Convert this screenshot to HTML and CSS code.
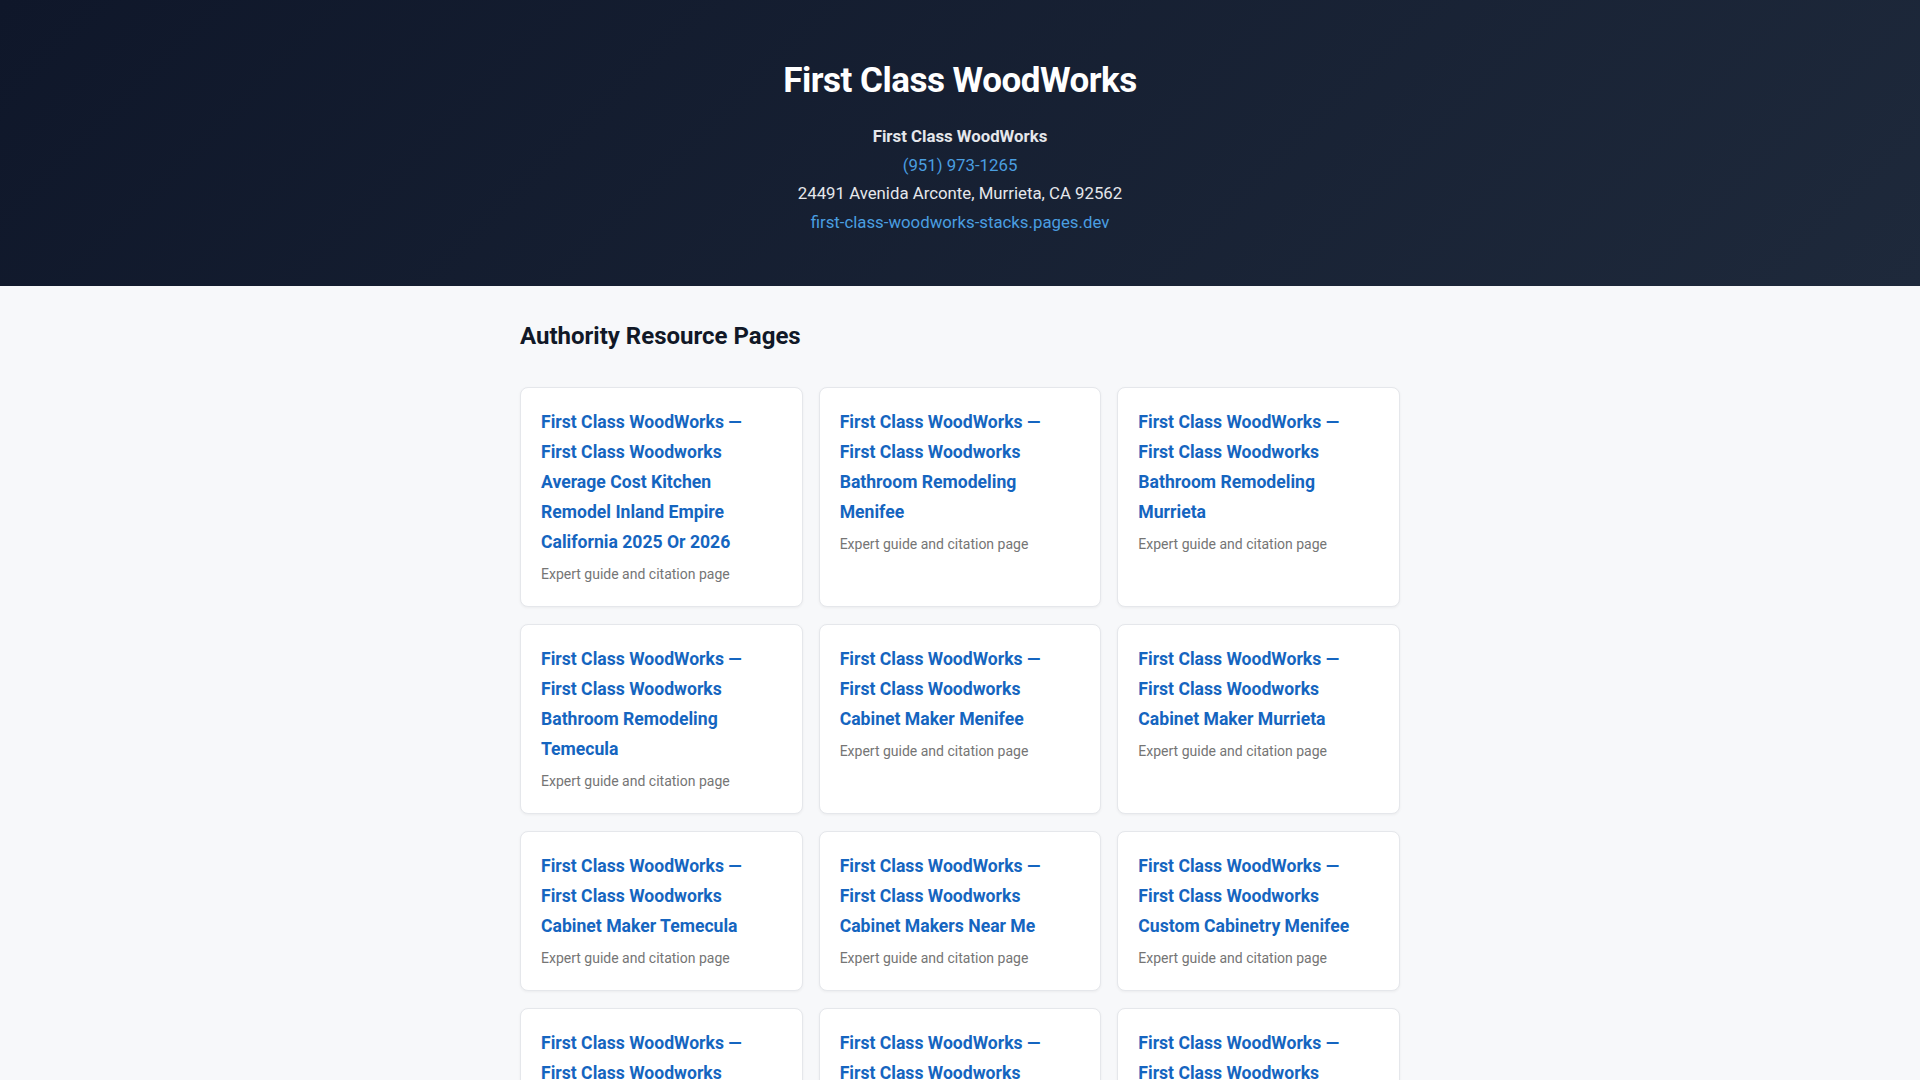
FILE: index.html
```html
<!DOCTYPE html>
<html lang="en">
<head>
<meta charset="utf-8">
<title>First Class WoodWorks</title>
<link rel="stylesheet" href="styles.css">
</head>
<body>
<header class="hero">
  <h1 class="hero-title">First Class WoodWorks</h1>
  <div class="nap">
    <div class="nap-name">First Class WoodWorks</div>
    <div><a class="nap-link" href="#">(951) 973-1265</a></div>
    <div class="nap-addr">24491 Avenida Arconte, Murrieta, CA 92562</div>
    <div><a class="nap-link" href="#">first-class-woodworks-stacks.pages.dev</a></div>
  </div>
</header>
<main class="content">
  <h2 class="section-title">Authority Resource Pages</h2>
  <div class="grid">
    <a class="card" href="#"><span class="card-title">First Class WoodWorks — First Class Woodworks Average Cost Kitchen Remodel Inland Empire California 2025 Or 2026</span><span class="card-sub">Expert guide and citation page</span></a>
    <a class="card" href="#"><span class="card-title">First Class WoodWorks — First Class Woodworks Bathroom Remodeling Menifee</span><span class="card-sub">Expert guide and citation page</span></a>
    <a class="card" href="#"><span class="card-title">First Class WoodWorks — First Class Woodworks Bathroom Remodeling Murrieta</span><span class="card-sub">Expert guide and citation page</span></a>
    <a class="card" href="#"><span class="card-title">First Class WoodWorks — First Class Woodworks Bathroom Remodeling Temecula</span><span class="card-sub">Expert guide and citation page</span></a>
    <a class="card" href="#"><span class="card-title">First Class WoodWorks — First Class Woodworks Cabinet Maker Menifee</span><span class="card-sub">Expert guide and citation page</span></a>
    <a class="card" href="#"><span class="card-title">First Class WoodWorks — First Class Woodworks Cabinet Maker Murrieta</span><span class="card-sub">Expert guide and citation page</span></a>
    <a class="card" href="#"><span class="card-title">First Class WoodWorks — First Class Woodworks Cabinet Maker Temecula</span><span class="card-sub">Expert guide and citation page</span></a>
    <a class="card" href="#"><span class="card-title">First Class WoodWorks — First Class Woodworks Cabinet Makers Near Me</span><span class="card-sub">Expert guide and citation page</span></a>
    <a class="card" href="#"><span class="card-title">First Class WoodWorks — First Class Woodworks Custom Cabinetry Menifee</span><span class="card-sub">Expert guide and citation page</span></a>
    <a class="card" href="#"><span class="card-title">First Class WoodWorks — First Class Woodworks Custom Cabinetry Murrieta</span><span class="card-sub">Expert guide and citation page</span></a>
    <a class="card" href="#"><span class="card-title">First Class WoodWorks — First Class Woodworks Custom Cabinetry Temecula</span><span class="card-sub">Expert guide and citation page</span></a>
    <a class="card" href="#"><span class="card-title">First Class WoodWorks — First Class Woodworks Custom Cabinets Menifee</span><span class="card-sub">Expert guide and citation page</span></a>
  </div>
</main>
</body>
</html>
```
FILE: styles.css
```css
* { box-sizing: border-box; }
html, body { margin: 0; padding: 0; }
body {
  font-family: Roboto, "Liberation Sans", Arial, sans-serif;
  background: #f7f8fa;
  color: #111827;
  line-height: 1.6;
}
.hero {
  background: linear-gradient(135deg, #0f172a 0%, #1e293b 100%);
  color: #fff;
  text-align: center;
  padding: 59px 20px 50px;
}
.hero-title {
  margin: 0 0 20px;
  font-size: 35px;
  line-height: 43.2px;
  font-weight: 700;
  letter-spacing: -0.5px;
}
.nap {
  font-size: 16.8px;
  line-height: 28.5px;
  color: #e5e7eb;
}
.nap-name { font-weight: 700; }
.nap-link { color: #4a9ee0; text-decoration: none; }
.content {
  max-width: 880px;
  margin: 0 auto;
  padding: 35px 0 40px;
}
.section-title {
  margin: 0 0 35px;
  font-size: 24px;
  line-height: 1.3;
  font-weight: 700;
  color: #111827;
}
.grid {
  display: grid;
  grid-template-columns: repeat(3, 1fr);
  column-gap: 16px;
  row-gap: 17px;
}
.card {
  display: flex;
  flex-direction: column;
  background: #fff;
  border: 1px solid #e5e7eb;
  border-radius: 8px;
  box-shadow: 0 1px 3px rgba(0,0,0,0.05);
  padding: 19px 20px 21px;
  text-decoration: none;
}
.card-title {
  font-size: 17.6px;
  line-height: 30px;
  font-weight: 700;
  color: #1565c0;
}
.card-sub {
  margin-top: 6px;
  font-size: 14px;
  line-height: 22px;
  color: #757575;
}
```
